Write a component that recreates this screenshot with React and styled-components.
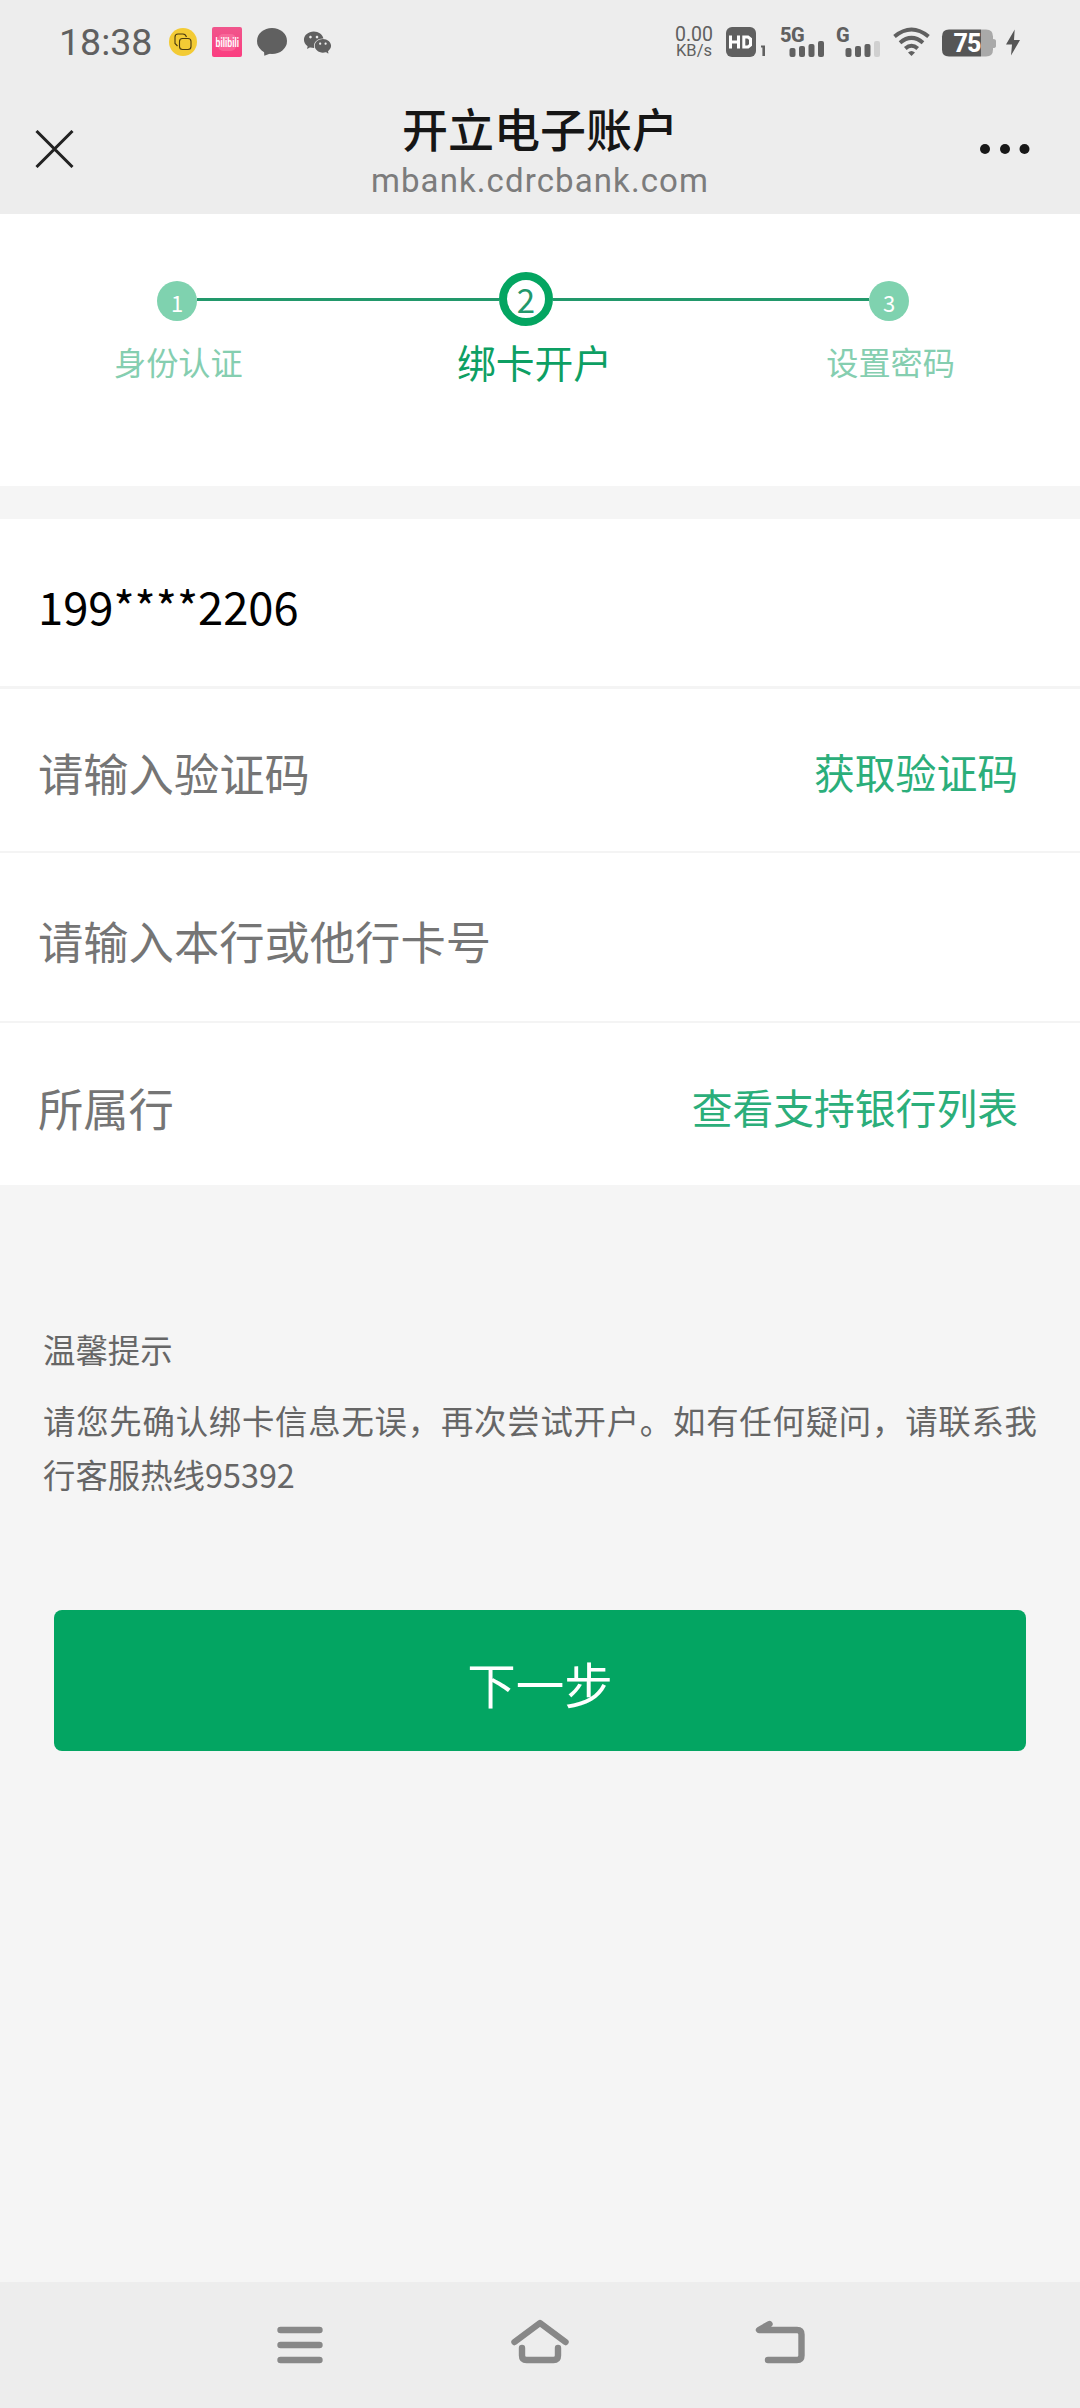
import React from "react";
import styled, { createGlobalStyle } from "styled-components";
import { AiFillWechat } from "react-icons/ai";

const GlobalStyle = createGlobalStyle`
  * {
    box-sizing: border-box;
  }
  body {
    margin: 0;
    background-color: #f5f5f5;
    font-family: "Noto Sans CJK SC", "Noto Sans", sans-serif;
  }
  p, h1 {
    margin: 0;
  }
`;

const Page = styled.div`
  display: flex;
  flex-direction: column;
  width: 1080px;
  height: 2408px;
  overflow: hidden;
  background-color: #f5f5f5;
`;

const StatusBar = styled.div`
  display: flex;
  align-items: center;
  justify-content: space-between;
  height: 84px;
  padding: 0 60px 0 59px;
  background-color: #ededed;
  color: #606060;
  font-family: Roboto, sans-serif;

  svg {
    display: block;
    flex: none;
    overflow: visible;
  }
`;

const StatusGroup = styled.div`
  display: flex;
  align-items: center;
  gap: ${({ $gap }) => $gap}px;
`;

const Time = styled.span`
  width: 95px;
  font-size: 37.5px;
  line-height: 46px;
  white-space: nowrap;
`;

const Speed = styled.div`
  display: flex;
  flex-direction: column;
  align-items: center;
  width: 40px;
  line-height: 17px;
  font-size: 19.5px;

  small {
    font-size: 16.5px;
    line-height: 16px;
  }
`;

const TitleBar = styled.header`
  display: flex;
  align-items: center;
  justify-content: space-between;
  height: 130px;
  padding: 0 50px 0 35px;
  background-color: #ededed;
`;

const TitleBox = styled.div`
  display: flex;
  flex-direction: column;
  align-items: center;
  margin-left: 26px;
`;

const Title = styled.h1`
  font-size: 46px;
  font-weight: 500;
  line-height: 60px;
  color: #161616;
`;

const Host = styled.p`
  padding-top: 3px;
  font-family: Roboto, sans-serif;
  font-size: 33px;
  line-height: 41px;
  letter-spacing: 1.1px;
  color: #7c7c7c;
`;

const Steps = styled.section`
  height: 272px;
  padding-top: 58px;
  background-color: #fff;
`;

const StepLine = styled.div`
  display: flex;
  padding: 0 171px 0 157px;
`;

const Connector = styled.div`
  width: ${({ $width }) => $width}px;
  height: 3px;
  margin-top: 26px;
  background-color: #22986b;
`;

const StepDot = styled.div`
  display: flex;
  justify-content: center;
  width: 40px;
  height: 40px;
  margin-top: 9px;
  border-radius: 50%;
  background-color: #7fd2af;
  color: #fff;
  font-size: 22px;
  line-height: 43px;
`;

const ActiveDot = styled(StepDot)`
  width: 54px;
  height: 54px;
  margin-top: 0;
  border: 8px solid #04a561;
  background-color: #fff;
  color: #22986b;
  font-size: 33px;
  line-height: 39px;
`;

const StepLabels = styled.div`
  display: flex;
  align-items: center;
  justify-content: space-between;
  height: 60px;
  margin-top: 5px;
  padding: 0 125px 0 114px;
`;

const StepLabel = styled.span`
  font-size: ${({ $active }) => ($active ? 38.8 : 32.2)}px;
  line-height: 60px;
  color: ${({ $active }) => ($active ? "#0d9f63" : "#85ceb0")};
`;

const Form = styled.section`
  margin-top: 33px;
  background-color: #fff;
`;

const Row = styled.div`
  display: flex;
  align-items: center;
  justify-content: space-between;
  height: ${({ $height }) => $height}px;
  padding: ${({ $top }) => $top || 6}px 62px 0 38px;
  border-bottom: ${({ $line }) => $line || 0}px solid #f4f4f4;
`;

const Value = styled.span`
  font-size: 45.3px;
  line-height: 66px;
  color: ${({ $filled }) => ($filled ? "#000" : "#757575")};
`;

const RowLink = styled.a`
  font-size: 40.8px;
  line-height: 60px;
  color: #2bae7a;
`;

const Tips = styled.section`
  margin-top: 137px;
  padding: 0 43px;
  font-size: 32.4px;
  line-height: 54px;
  color: #666;
`;

const TipsText = styled.p`
  margin-top: 17px;
  text-align: justify;
`;

const NextButton = styled.button`
  height: 141px;
  margin: 109px 54px 0;
  padding: 4px 0 0;
  border: none;
  border-radius: 8px;
  background-color: #03a562;
  color: #fff;
  font-family: inherit;
  font-size: 48.5px;
`;

const NavBar = styled.nav`
  display: flex;
  align-items: center;
  justify-content: space-between;
  height: 126px;
  margin-top: auto;
  padding: 0 270px;
  background-color: #ededed;

  svg {
    display: block;
    fill: none;
    stroke: #888;
    stroke-width: 6.4;
    stroke-linecap: round;
    stroke-linejoin: round;
  }
`;

const CloneIcon = () => (
  <svg width="28" height="28" viewBox="0 0 28 28">
    <circle cx="14" cy="14" r="14" fill="#f3cb35" />
    <g fill="none" stroke="#4a3a10" strokeWidth="1.1">
      <path d="M8.500 18 L6 15.500 V9 Q6 6 9 6 H14 Q16.500 6 17.500 9" />
      <rect x="10.500" y="10.500" width="11.500" height="11" rx="3" />
    </g>
  </svg>
);

const VideoAppIcon = () => (
  <svg width="30" height="30" viewBox="0 0 30 30">
    <defs>
      <linearGradient id="pink" x1="0" y1="0" x2="0" y2="1">
        <stop offset="0" stopColor="#f0568c" />
        <stop offset="1" stopColor="#fb3d80" />
      </linearGradient>
    </defs>
    <rect width="30" height="30" rx="2" fill="url(#pink)" />
    <rect x="6" y="7" width="18" height="17" rx="5" fill="#ff8fb4" opacity="0.4" />
    <text
      x="3.500"
      y="19.800"
      fill="#fff"
      fontSize="12.500"
      fontWeight="600"
      textLength="23.500"
      lengthAdjust="spacingAndGlyphs"
    >
      bilibili
    </text>
  </svg>
);

const ChatIcon = () => (
  <svg width="30" height="30" viewBox="0 0 30 30" fill="#606060">
    <ellipse cx="15" cy="14" rx="15" ry="13" />
    <path d="M7 23 L7.300 28.700 Q12 27.700 15 25 Z" />
  </svg>
);

const HdIcon = () => (
  <svg width="43" height="30" viewBox="0 0 43 30" fill="#606060">
    <rect width="30" height="30" rx="6" />
    <g fill="none" stroke="#fff" strokeWidth="3">
      <path d="M4.500 8.500 V21.500 M12.500 8.500 V21.500 M4.500 15 H12.500" />
      <path d="M17.800 10 H22 L24.500 12 V18 L22 20 H17.800 Z" />
    </g>
    <path d="M35 20.500 V18.500 H39 V29 H36.400 V20.500 Z" />
  </svg>
);

const Signal = ({ label, weak }) => (
  <svg width="44" height="30" viewBox="0 0 44 30" fill="#606060">
    <text x="-1" y="14.700" fontSize="20" fontWeight="800" letterSpacing="-0.5">
      {label}
    </text>
    <rect x="8.500" y="21" width="6" height="9" rx="2" />
    <rect x="18" y="19" width="6" height="11" rx="2" />
    <rect x="27.500" y="17" width="6" height="13" rx="2" />
    <rect x="37" y="14" width="6" height="16" rx="2" opacity={weak ? 0.2 : 1} />
  </svg>
);

const WifiIcon = () => (
  <svg width="37" height="30" viewBox="0 0 37 30" fill="none" stroke="#606060" strokeWidth="4">
    <path d="M1.500 9.500 Q18.500 -4.500 35.500 9.500" />
    <path d="M7 15.700 Q18.500 6 30 15.700" />
    <path d="M12.300 21.500 Q18.500 16 24.700 21.500" />
    <path d="M15 25.500 Q18.500 22.500 22 25.500 L18.500 29 Z" fill="#606060" stroke="none" />
  </svg>
);

const BatteryIcon = () => (
  <svg width="54" height="28" viewBox="0 -1.500 54 28">
    <path d="M7 0 H44 Q51 0 51 7 V9.500 Q54 9.500 54 11.500 V16.500 Q54 18.500 51 18.500 V20 Q51 27 44 27 H39 V0 Z" fill="#a9a9a9" />
    <path d="M7 0 H39 V27 H7 Q0 27 0 20 V7 Q0 0 7 0 Z" fill="#565656" />
    <text x="11.500" y="22.500" fill="#fff" fontSize="25" fontWeight="800" textLength="28">
      75
    </text>
  </svg>
);

const ChargeIcon = styled(({ className }) => (
  <svg className={className} width="14" height="27" viewBox="0 0 14 27" fill="#565656">
    <path d="M8.700 0.500 L0 15.500 H6 L5 26.500 L14 11 H8 Z" />
  </svg>
))`
  margin-left: -2px;
`;

const CloseIcon = () => (
  <svg width="39" height="38" viewBox="0 0 39 38" stroke="#222" strokeWidth="3">
    <path d="M1.500 1 L37.500 37 M37.500 1 L1.500 37" />
  </svg>
);

const MoreIcon = () => (
  <svg width="50" height="10" viewBox="0 0 50 10" fill="#181818">
    <circle cx="5" cy="5" r="5" />
    <circle cx="25" cy="5" r="5" />
    <circle cx="44.500" cy="5" r="5" />
  </svg>
);

const rows = [
  { text: "199****2206", filled: true, height: 170, line: 3, top: 4 },
  { text: "请输入验证码", link: "获取验证码", height: 164, line: 2, top: 4 },
  { text: "请输入本行或他行卡号", height: 170, line: 2 },
  { text: "所属行", link: "查看支持银行列表", height: 162 },
];

const App = () => {
  return (
    <>
      <GlobalStyle />
      <Page>
        <StatusBar>
          <StatusGroup $gap={15}>
            <Time>18:38</Time>
            <CloneIcon />
            <VideoAppIcon />
            <ChatIcon />
            <AiFillWechat size={31} />
          </StatusGroup>
          <StatusGroup $gap={12}>
            <Speed>
              <span>0.00</span>
              <small>KB/s</small>
            </Speed>
            <HdIcon />
            <Signal label="5G" />
            <Signal label="G" weak />
            <WifiIcon />
            <BatteryIcon />
            <ChargeIcon />
          </StatusGroup>
        </StatusBar>

        <TitleBar>
          <CloseIcon />
          <TitleBox>
            <Title>开立电子账户</Title>
            <Host>mbank.cdrcbank.com</Host>
          </TitleBox>
          <MoreIcon />
        </TitleBar>

        <Steps>
          <StepLine>
            <StepDot>1</StepDot>
            <Connector $width={302} />
            <ActiveDot>2</ActiveDot>
            <Connector $width={316} />
            <StepDot>3</StepDot>
          </StepLine>
          <StepLabels>
            <StepLabel>身份认证</StepLabel>
            <StepLabel $active>绑卡开户</StepLabel>
            <StepLabel>设置密码</StepLabel>
          </StepLabels>
        </Steps>

        <Form>
          {rows.map(({ text, link, filled, height, line, top }) => (
            <Row key={text} $height={height} $line={line} $top={top}>
              <Value $filled={filled}>{text}</Value>
              {link && <RowLink>{link}</RowLink>}
            </Row>
          ))}
        </Form>

        <Tips>
          <p>温馨提示</p>
          <TipsText>
            请您先确认绑卡信息无误，再次尝试开户。如有任何疑问，请联系我行客服热线95392
          </TipsText>
        </Tips>

        <NextButton type="button">下一步</NextButton>

        <NavBar>
          <svg width="60" height="60" viewBox="270 2315 60 60">
            <path d="M280.500 2330 H319.500 M280.500 2345 H319.500 M280.500 2360 H319.500" />
          </svg>
          <svg width="60" height="60" viewBox="510 2315 60 60">
            <path d="M514.500 2342 L540 2323 L565.500 2342" />
            <path d="M522 2348 V2355.500 Q522 2360 526.500 2360 H553.500 Q558 2360 558 2355.500 V2348" />
          </svg>
          <svg width="60" height="60" viewBox="750 2315 60 60">
            <path d="M769.500 2324 L759 2330 H797 Q801.500 2330 801.500 2334.500 V2355.500 Q801.500 2360 797 2360 H768" />
          </svg>
        </NavBar>
      </Page>
    </>
  );
};

export default App;
